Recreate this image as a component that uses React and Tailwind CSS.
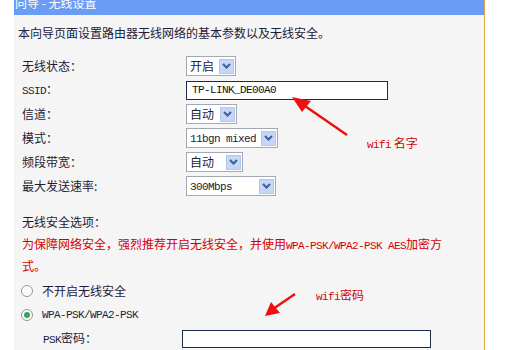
import React from "react";

const CJK = "font-['Noto_Sans_CJK_SC',sans-serif]";
const MONO = "font-['Liberation_Mono',monospace] text-[11px] tracking-[-0.6px]";

function Chevron() {
  return (
    <svg width="9" height="6" viewBox="0 0 9 6">
      <path d="M1 1 L4.5 4.5 L8 1" stroke="#3d5d9e" strokeWidth="2" fill="none" />
    </svg>
  );
}

function Select({ w, children }) {
  return (
    <div className={`h-[20px] ${w} bg-white border border-[#a3a9b3] flex items-center justify-between pl-[3px] pr-[1px]`}>
      <span className="leading-[16px]">{children}</span>
      <span className="w-[15px] h-[15px] bg-[#c6d6f6] border border-[#b3c6ee] flex items-center justify-center">
        <Chevron />
      </span>
    </div>
  );
}

function Row({ label, children }) {
  return (
    <div className="h-[24px] flex items-center">
      <div className="w-[164px] leading-[14px]">{label}</div>
      {children}
    </div>
  );
}

function Radio({ checked }) {
  return (
    <span className="w-[12px] h-[12px] rounded-full border border-[#8b99a8] bg-[#fbfbfb] flex items-center justify-center">
      {checked && <span className="w-[6px] h-[6px] rounded-full bg-[#34a853]" />}
    </span>
  );
}

export default function App() {
  return (
    <div className={`relative w-[510px] h-[350px] overflow-hidden bg-white flex ${CJK} text-[12px] text-[#1d2038]`}>
      <div className="w-[14px] shrink-0" />
      <div className="w-[471px] shrink-0 bg-[#f5f5f5] border-r border-[#e2a550] flex flex-col">
        <div className="h-[15px] bg-[#6a9bf5] overflow-hidden pl-[1px]">
          <div className="text-white text-[12px] leading-[12px] mt-[-3px]">向导 - 无线设置</div>
        </div>
        <div className="pl-[4px] mt-[12px] leading-[12px]">本向导页面设置路由器无线网络的基本参数以及无线安全。</div>
        <div className="pl-[8px] mt-[15px] flex flex-col">
          <Row label="无线状态：">
            <Select w="w-[50px]">开启</Select>
          </Row>
          <Row label={<span><span className={MONO}>SSID</span>：</span>}>
            <div className="w-[202px] h-[19px] bg-white border border-[#1c2a4e] flex items-center pl-[5px]">
              <span className={`${MONO} text-[#111]`}>TP-LINK_DE00A0</span>
            </div>
          </Row>
          <Row label="信道：">
            <Select w="w-[51px]">自动</Select>
          </Row>
          <Row label="模式：">
            <Select w="w-[92px]"><span className={MONO}>11bgn mixed</span></Select>
          </Row>
          <Row label="频段带宽：">
            <Select w="w-[57px]">自动</Select>
          </Row>
          <Row label="最大发送速率:">
            <Select w="w-[90px]"><span className={MONO}>300Mbps</span></Select>
          </Row>
          <div className="mt-[14px] leading-[20px]">无线安全选项：</div>
          <div className="mt-[2px] leading-[19px] text-[#d40000]">
            为保障网络安全，强烈推荐开启无线安全，并使用<span className={MONO}>WPA-PSK/WPA2-PSK AES</span>加密方
            <br />式。
          </div>
          <div className="mt-[4px] h-[24px] flex items-center ml-[-1px] gap-[9px]">
            <Radio />
            <span>不开启无线安全</span>
          </div>
          <div className="h-[24px] flex items-center ml-[-1px] gap-[9px]">
            <Radio checked />
            <span className={MONO}>WPA-PSK/WPA2-PSK</span>
          </div>
          <div className="h-[23px] flex items-center pl-[21px]">
            <span className="w-[139px]"><span className={MONO}>PSK</span>密码：</span>
            <div className="w-[249px] h-[18px] bg-white border border-[#1c2a4e]" />
          </div>
        </div>
      </div>
      <div className="flex-1 bg-white" />

      <svg className="absolute left-0 top-0" width="510" height="350" viewBox="0 0 510 350">
        <line x1="347" y1="135" x2="302" y2="104" stroke="#ee1111" strokeWidth="2.5" />
        <polygon points="292,97 311,101 302,112" fill="#ee1111" />
        <line x1="295" y1="294" x2="273" y2="309" stroke="#ee1111" strokeWidth="2.5" />
        <polygon points="265,316 271,302 280,313" fill="#ee1111" />
      </svg>
      <div className="absolute left-[367px] top-[136px] leading-[14px] text-[#d40000]">
        <span className={MONO}>wifi</span> 名字
      </div>
      <div className="absolute left-[316px] top-[288px] leading-[14px] text-[#d40000]">
        <span className={MONO}>wifi</span>密码
      </div>
    </div>
  );
}
